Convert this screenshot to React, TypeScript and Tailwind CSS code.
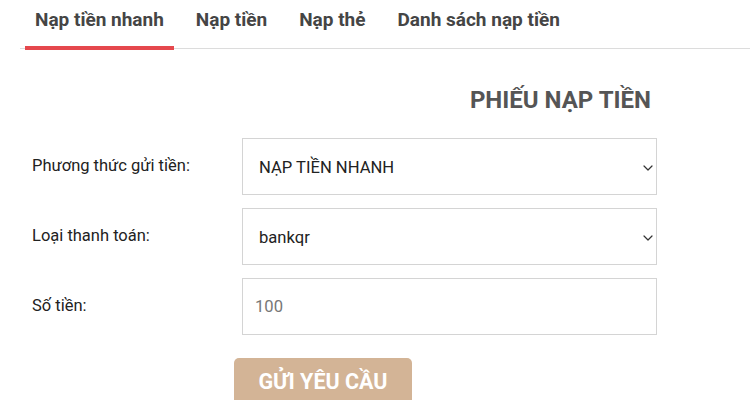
import React, { useState } from 'react';

const tabs = ['Nạp tiền nhanh', 'Nạp tiền', 'Nạp thẻ', 'Danh sách nạp tiền'];

const Chevron: React.FC = () => (
  <svg width="10" height="6" viewBox="0 0 10 6" fill="none" className="shrink-0">
    <path d="M1 1l4 4 4-4" stroke="#333" strokeWidth="1.2" strokeLinecap="round" strokeLinejoin="round" />
  </svg>
);

export default function App() {
  const [active, setActive] = useState(0);

  return (
    <div className="w-[750px] h-[400px] overflow-hidden bg-white font-['Roboto',sans-serif] text-[#222]">
      {/* Tab bar */}
      <div className="ml-5 flex items-end border-b border-[#dcdcdc] h-[49px]">
        <div className="flex ml-[5px] gap-[12px]">
          {tabs.map((t, i) => (
            <button
              key={t}
              onClick={() => setActive(i)}
              className={`relative px-[10px] pb-[17px] text-[19px] font-bold leading-[22px] text-[#454545] ${i === active ? 'after:absolute after:left-0 after:right-0 after:bottom-[-2px] after:h-[4px] after:bg-[#e5484d]' : ''}`}
            >
              {t}
            </button>
          ))}
        </div>
      </div>

      {/* Form */}
      <div className="w-[657px]">
        <h2 className="mt-[37px] pr-[6px] text-right text-[24px] font-bold leading-[28px] text-[#555]">
          PHIẾU NẠP TIỀN
        </h2>

        <div className="mt-[24px] flex flex-col gap-[13px]">
          <div className="flex items-center">
            <label className="w-[242px] pl-[32px] text-[16.5px]">Phương thức gửi tiền:</label>
            <div className="flex-1 h-[57px] flex items-center justify-between pl-[16px] pr-[3px] pt-[3px] border border-[#d4d4d4] text-[16.6px]">
              <span>NẠP TIỀN NHANH</span>
              <Chevron />
            </div>
          </div>
          <div className="flex items-center">
            <label className="w-[242px] pl-[32px] text-[16.5px]">Loại thanh toán:</label>
            <div className="flex-1 h-[57px] flex items-center justify-between pl-[16px] pr-[3px] pt-[3px] border border-[#d4d4d4] text-[16.6px]">
              <span>bankqr</span>
              <Chevron />
            </div>
          </div>
          <div className="flex items-center">
            <label className="w-[242px] pl-[32px] text-[16.5px]">Số tiền:</label>
            <input
              placeholder="100"
              className="flex-1 h-[57px] pl-[12px] border border-[#d4d4d4] text-[16.6px] placeholder:text-[#777] outline-none"
            />
          </div>
        </div>

        <div className="mt-[23px] pl-[234px]">
          <button className="w-[178px] h-[50px] rounded-[5px] bg-[#d3b496] text-white text-[21.5px] font-bold pb-[2px]">
            GỬI YÊU CẦU
          </button>
        </div>
      </div>
    </div>
  );
}
